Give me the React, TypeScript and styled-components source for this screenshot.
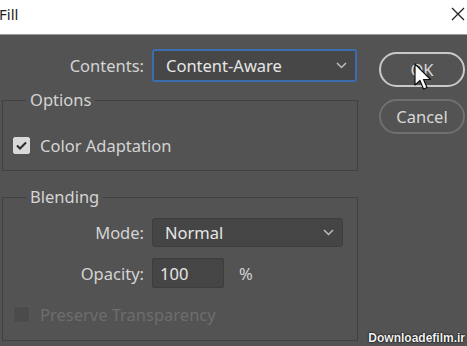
import React from "react";
import styled, { createGlobalStyle } from "styled-components";

const Global = createGlobalStyle`
  html, body { margin: 0; padding: 0; background: #535353; }
  body { font-family: "Noto Sans", "Open Sans", sans-serif; }
`;

const Window = styled.div`
  position: relative;
  width: 467px;
  height: 346px;
  overflow: hidden;
  background: #535353;
  display: flex;
  flex-direction: column;
`;

const TitleBar = styled.div`
  height: 34px;
  flex: 0 0 34px;
  background: #ffffff;
  border-bottom: 1px solid #9c9c9c;
  display: flex;
  align-items: center;
  justify-content: space-between;
  padding: 0 1px 0 0;
`;

const Title = styled.span`
  font-family: "Noto Sans", sans-serif;
  font-size: 15px;
  color: #1e1e1e;
  margin-left: -1px;
  margin-top: -6px;
`;

const CloseIcon = styled.svg`
  width: 14px;
  height: 14px;
  margin-top: -6px;
  margin-right: 1px;
`;

const Body = styled.div`
  flex: 1;
  display: flex;
  padding-left: 2px;
`;

const MainColumn = styled.div`
  width: 356px;
  padding-top: 14px;
  display: flex;
  flex-direction: column;
`;

const Row = styled.div<{ $h: number; $mt?: number }>`
  display: flex;
  align-items: center;
  height: ${(p) => p.$h}px;
  margin-top: ${(p) => p.$mt ?? 0}px;
`;

const Label = styled.span<{ $w: number }>`
  width: ${(p) => p.$w}px;
  flex: 0 0 ${(p) => p.$w}px;
  text-align: right;
  padding-right: 8px;
  box-sizing: border-box;
  font-size: 16.5px;
  color: #d4d4d4;
`;

const Select = styled.div<{ $w: number; $focus?: boolean }>`
  width: ${(p) => p.$w}px;
  height: 100%;
  box-sizing: border-box;
  display: flex;
  align-items: center;
  justify-content: space-between;
  padding: 0 8px 0 12px;
  background: ${(p) => (p.$focus ? "#474747" : "#454545")};
  border: ${(p) => (p.$focus ? "2px solid #3a6eae" : "1px solid #3d3d3d")};
  border-radius: 3px;
  font-size: 16.5px;
  color: #e6e6e6;
`;

const Chevron = styled.svg`
  width: 11px;
  height: 7px;
`;

const Input = styled.div`
  width: 72px;
  height: 100%;
  box-sizing: border-box;
  background: #454545;
  border: 1px solid #3d3d3d;
  border-radius: 2px;
  padding-left: 7px;
  display: flex;
  align-items: center;
  font-size: 16.5px;
  color: #e6e6e6;
`;

const Unit = styled.span`
  margin-left: 15px;
  font-size: 16.5px;
  color: #d4d4d4;
`;

const Group = styled.fieldset<{ $mt: number; $pt: number; $pb: number }>`
  margin: ${(p) => p.$mt}px 0 0 0;
  padding: ${(p) => p.$pt}px 0 ${(p) => p.$pb}px 0;
  border: 1px solid #404040;
  min-width: 0;
  display: flex;
  flex-direction: column;
`;

const Legend = styled.legend`
  margin-left: 23px;
  padding: 0 4px;
  font-size: 16.5px;
  line-height: 20px;
  color: #d4d4d4;
`;

const CheckRow = styled.div<{ $mt?: number }>`
  display: flex;
  align-items: center;
  height: 17px;
  margin-top: ${(p) => p.$mt ?? 0}px;
  padding-left: 10px;
`;

const Box = styled.span<{ $checked?: boolean; $disabled?: boolean }>`
  width: 17px;
  height: 17px;
  box-sizing: border-box;
  border-radius: 2px;
  background: ${(p) => (p.$checked ? "#d9d9d9" : "#4b4b4b")};
  border: 1px solid ${(p) => (p.$checked ? "#d9d9d9" : "#565656")};
  display: flex;
  align-items: center;
  justify-content: center;
`;

const CheckText = styled.span<{ $disabled?: boolean }>`
  margin-left: 10px;
  font-size: 16.5px;
  color: ${(p) => (p.$disabled ? "#6d6d6d" : "#d4d4d4")};
`;

const ButtonColumn = styled.div`
  margin-left: 21px;
  padding-top: 17px;
  width: 86px;
  display: flex;
  flex-direction: column;
  gap: 12px;
`;

const Button = styled.div<{ $primary?: boolean }>`
  height: 35px;
  box-sizing: border-box;
  border-radius: 18px;
  border: 2px solid ${(p) => (p.$primary ? "#c9c9c9" : "#707070")};
  display: flex;
  align-items: center;
  justify-content: center;
  font-size: 16.5px;
  color: #d8d8d8;
`;

const Cursor = styled.svg`
  position: absolute;
  left: 414px;
  top: 63px;
  width: 19px;
  height: 28px;
`;

const Watermark = styled.span`
  position: absolute;
  right: 2px;
  bottom: 1px;
  font-family: "Liberation Sans", Arial, sans-serif;
  font-weight: bold;
  font-size: 12px;
  color: #f2f2f2;
  text-shadow: 0 0 2px #000, 0 0 1px #000;
`;

export default function App() {
  return (
    <>
      <Global />
      <Window>
        <TitleBar>
          <Title>Fill</Title>
          <CloseIcon viewBox="0 0 14 14">
            <path d="M1 1 L13 13 M13 1 L1 13" stroke="#222" strokeWidth="1.3" fill="none" />
          </CloseIcon>
        </TitleBar>
        <Body>
          <MainColumn>
            <Row $h={33}>
              <Label $w={150}>Contents:</Label>
              <Select $w={205} $focus>
                Content-Aware
                <Chevron viewBox="0 0 11 7">
                  <path d="M1 1 L5.5 5.5 L10 1" stroke="#bdbdbd" strokeWidth="1.5" fill="none" />
                </Chevron>
              </Select>
            </Row>
            <Group $mt={8} $pt={27} $pb={16}>
              <Legend>Options</Legend>
              <CheckRow>
                <Box $checked>
                  <svg width="11" height="9" viewBox="0 0 11 9">
                    <path d="M1 4.5 L4 7.5 L10 1.5" stroke="#2a2a2a" strokeWidth="2" fill="none" />
                  </svg>
                </Box>
                <CheckText>Color Adaptation</CheckText>
              </CheckRow>
            </Group>
            <Group $mt={16} $pt={11} $pb={17}>
              <Legend>Blending</Legend>
              <Row $h={29}>
                <Label $w={149}>Mode:</Label>
                <Select $w={191}>
                  Normal
                  <Chevron viewBox="0 0 11 7">
                    <path d="M1 1 L5.5 5.5 L10 1" stroke="#bdbdbd" strokeWidth="1.5" fill="none" />
                  </Chevron>
                </Select>
              </Row>
              <Row $h={30} $mt={11}>
                <Label $w={149}>Opacity:</Label>
                <Input>100</Input>
                <Unit>%</Unit>
              </Row>
              <CheckRow $mt={18}>
                <Box $disabled />
                <CheckText $disabled>Preserve Transparency</CheckText>
              </CheckRow>
            </Group>
          </MainColumn>
          <ButtonColumn>
            <Button $primary>OK</Button>
            <Button>Cancel</Button>
          </ButtonColumn>
        </Body>
        <Cursor viewBox="0 0 19 28">
          <path
            d="M1 1 L1 22 L6 17.5 L9.5 26 L13 24.5 L9.5 16.5 L16.5 16.5 Z"
            fill="#ffffff"
            stroke="#111"
            strokeWidth="1.2"
            strokeLinejoin="round"
          />
        </Cursor>
        <Watermark>Downloadefilm.ir</Watermark>
      </Window>
    </>
  );
}
